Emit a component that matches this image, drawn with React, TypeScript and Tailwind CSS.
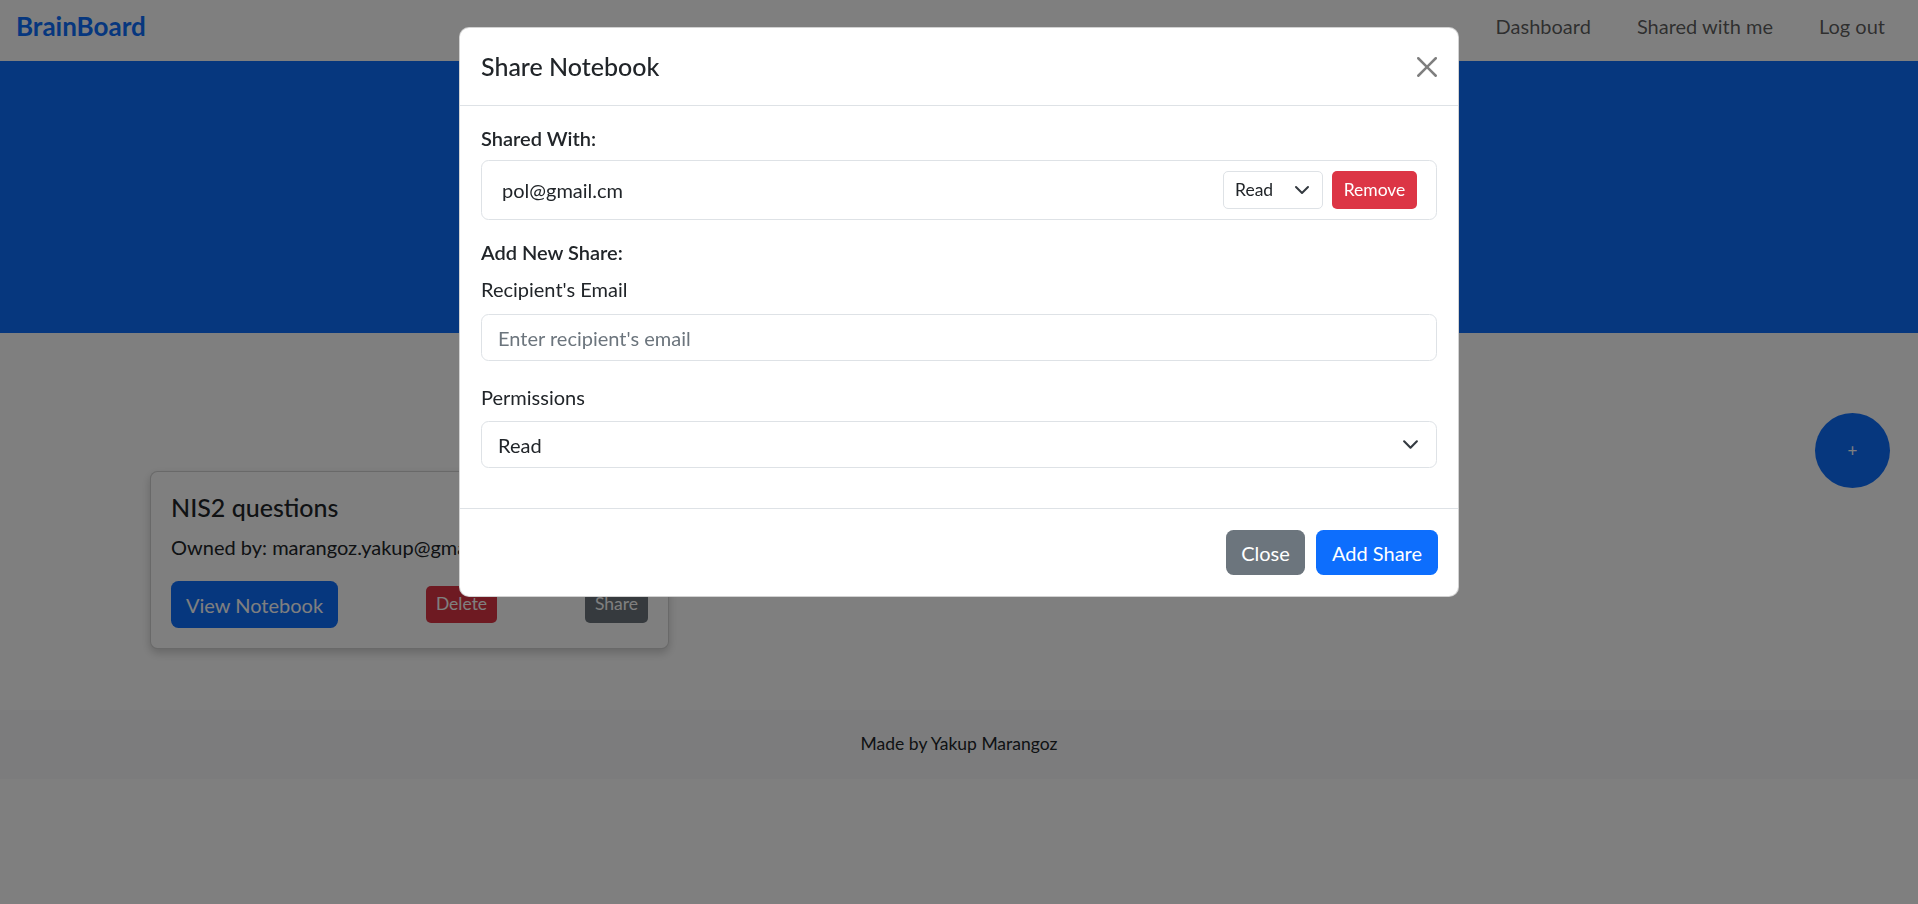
import React from "react";

const font = "font-['Lato','Liberation_Sans',sans-serif]";

function Chevron({ className }: { className?: string }) {
    return (
        <svg viewBox="0 0 16 16" className={className} fill="none">
            <path d="m2 5 6 6 6-6" stroke="#343a40" strokeWidth="2" strokeLinecap="round" strokeLinejoin="round" />
        </svg>
    );
}

function CloseIcon() {
    return (
        <svg viewBox="0 0 16 16" className="w-[20px] h-[20px] opacity-50">
            <path
                fill="#000"
                d="M.293.293a1 1 0 0 1 1.414 0L8 6.586 14.293.293a1 1 0 1 1 1.414 1.414L9.414 8l6.293 6.293a1 1 0 0 1-1.414 1.414L8 9.414l-6.293 6.293a1 1 0 0 1-1.414-1.414L6.586 8 .293 1.707a1 1 0 0 1 0-1.414"
            />
        </svg>
    );
}

function Navbar() {
    const links = ["Dashboard", "Shared with me", "Log out"];
    return (
        <nav className="h-[61px] bg-white flex items-center justify-between pl-[16px] pr-[33px] pb-[9px]">
            <span className="text-[26px] font-bold text-[#0d6efd]">BrainBoard</span>
            <div className="flex items-center gap-[46px] text-[20px] text-black/65">
                {links.map((l) => (
                    <span key={l}>{l}</span>
                ))}
            </div>
        </nav>
    );
}

function NotebookCard() {
    return (
        <div className="w-[519px] bg-white border border-black/[0.175] rounded-[7.5px] shadow-[0_4px_10px_rgba(0,0,0,0.2)] p-[20px] text-[#212529]">
            <h5 className="text-[25px] font-medium leading-[30px] mb-[10px]">NIS2 questions</h5>
            <p className="text-[20px] leading-[30px] mb-[19px]">Owned by: marangoz.yakup@gmail.com</p>
            <div className="flex items-center justify-between">
                <button className="h-[47px] px-[15px] rounded-[7.5px] bg-[#0d6efd] text-white text-[20px]">View Notebook</button>
                <button className="h-[37px] px-[10px] rounded-[5px] bg-[#dc3545] text-white text-[17.5px]">Delete</button>
                <button className="h-[37px] px-[10px] rounded-[5px] bg-[#6c757d] text-white text-[17.5px]">Share</button>
            </div>
        </div>
    );
}

function ShareModal() {
    return (
        <div className="fixed inset-0 z-50 bg-black/50 flex justify-center items-start pt-[27px]">
            <div className="w-[1000px] bg-white border border-black/[0.175] rounded-[10px] text-[#212529]">
                <div className="h-[78px] flex items-center justify-between px-[21px] border-b border-[#dee2e6]">
                    <h5 className="text-[25px] font-medium">Share Notebook</h5>
                    <CloseIcon />
                </div>

                <div className="px-[21px] pt-[20px] pb-[20px]">
                    <h6 className="text-[20px] font-semibold leading-[24px] mb-[10px]">Shared With:</h6>
                    <div className="h-[60px] border border-[#dee2e6] rounded-[7.5px] flex items-center justify-between pl-[20px] pr-[19px] mb-[20px]">
                        <span className="text-[20px]">pol@gmail.cm</span>
                        <div className="flex items-center gap-[9px]">
                            <div className="w-[100px] h-[38px] border border-[#dee2e6] rounded-[5px] flex items-center justify-between pl-[11px] pr-[12px] text-[17.5px]">
                                <span>Read</span>
                                <Chevron className="w-[16px] h-[16px]" />
                            </div>
                            <button className="w-[85px] h-[38px] rounded-[5px] bg-[#dc3545] text-white text-[17.5px]">Remove</button>
                        </div>
                    </div>

                    <h6 className="text-[20px] font-semibold leading-[24px] mt-[2px] mb-[10px]">Add New Share:</h6>
                    <label className="block text-[20px] leading-[30px] mb-[10px]">Recipient's Email</label>
                    <div className="h-[47px] border border-[#dee2e6] rounded-[7.5px] flex items-center px-[16px] text-[20px] text-[#6c757d] mb-[21px]">
                        Enter recipient's email
                    </div>

                    <label className="block text-[20px] leading-[30px] mb-[9px]">Permissions</label>
                    <div className="h-[47px] border border-[#dee2e6] rounded-[7.5px] flex items-center justify-between pl-[16px] pr-[17px] text-[20px] mb-[20px]">
                        <span>Read</span>
                        <Chevron className="w-[17px] h-[17px]" />
                    </div>
                </div>

                <div className="h-[88px] border-t border-[#dee2e6] flex items-center justify-end gap-[11px] px-[20px]">
                    <button className="w-[79px] h-[45px] rounded-[7.5px] bg-[#6c757d] text-white text-[20px]">Close</button>
                    <button className="w-[122px] h-[45px] rounded-[7.5px] bg-[#0d6efd] text-white text-[20px]">Add Share</button>
                </div>
            </div>
        </div>
    );
}

export default function App() {
    return (
        <div className={`${font} min-h-screen bg-white`}>
            <Navbar />
            <section className="h-[272px] bg-[#0d6efd]" />
            <main className="relative pt-[138px] pb-[61px] pl-[150px]">
                <NotebookCard />
                <button className="absolute right-[28px] top-[80px] w-[75px] h-[75px] rounded-full bg-[#0d6efd] text-white text-[17px] flex items-center justify-center">
                    +
                </button>
            </main>
            <footer className="h-[69px] bg-[#f8f9fa] flex items-center justify-center text-[17.5px] text-[#212529]">
                Made by Yakup Marangoz
            </footer>
            <ShareModal />
        </div>
    );
}
